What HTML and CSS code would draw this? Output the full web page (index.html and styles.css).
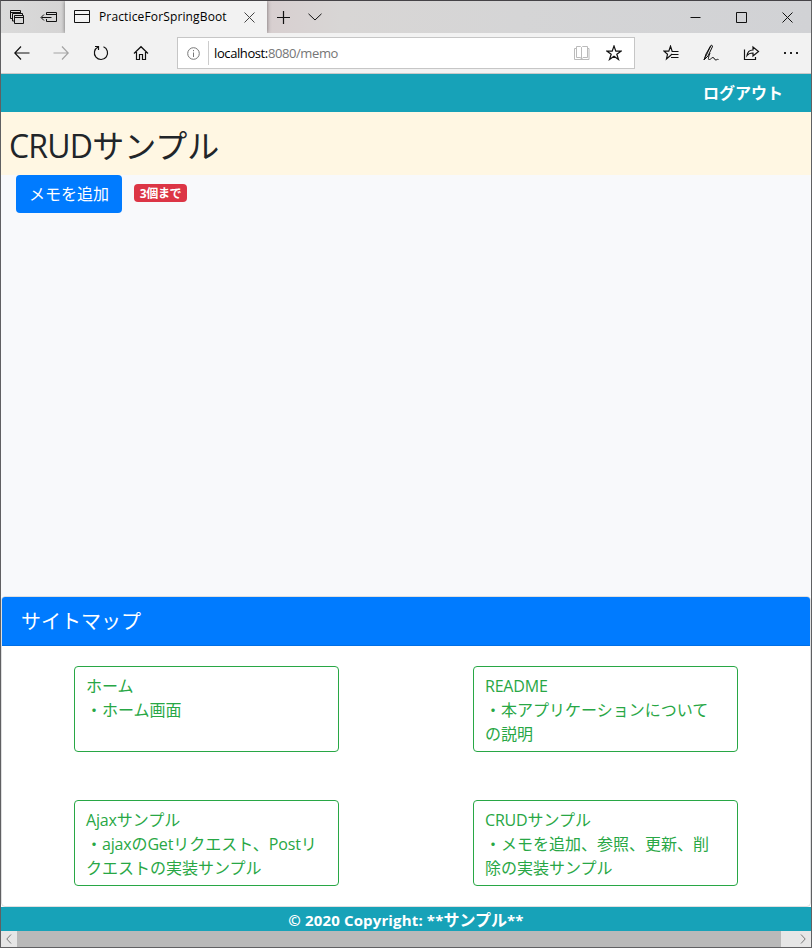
FILE: index.html
```html
<!DOCTYPE html>
<html lang="ja">
<head>
<meta charset="utf-8">
<title>PracticeForSpringBoot</title>
<link rel="stylesheet" href="styles.css">
</head>
<body>
<div class="window">
  <div class="tabs">
    <span class="cell"><svg width="16" height="16" viewBox="0 0 16 16"><path d="M4 9.500H1.500V1.500H11.500V4M5.500 12H3.500V4.500H13.500V6M1.500 3.500H11M5.500 6.500H14.500V14.500H5.500ZM5.500 8.500H14.500"/></svg></span>
    <span class="cell"><svg width="18" height="16" viewBox="0 0 18 16"><path d="M6.500 6V3.500H16.500V12.500H6.500V10M6.500 5.500H16.500M1.500 8.500H11.500M4 5.500L1 8.500L4 11.500"/></svg></span>
    <div class="tab">
      <svg width="16" height="14" viewBox="0 0 16 14"><path d="M.5.500H15.500V12.500H.5ZM.5 4.500H15.500"/></svg>
      <span class="title">PracticeForSpringBoot</span>
      <svg class="close" width="11" height="11" viewBox="0 0 11 11"><path d="M.5.500L10.500 10.500M10.500.500L.5 10.500"/></svg>
    </div>
    <span class="cell"><svg width="13" height="13" viewBox="0 0 13 13"><path class="heavy" d="M6.500 0V13M0 6.500H13"/></svg></span>
    <span class="cell"><svg width="14" height="8" viewBox="0 0 14 8"><path d="M.5.800L7 7L13.500.800"/></svg></span>
    <span class="controls">
      <i><svg width="11" height="11" viewBox="0 0 11 11"><path d="M.5 5.500H10.500"/></svg></i>
      <i><svg width="11" height="11" viewBox="0 0 11 11"><path d="M.5.500H10.500V10.500H.5Z"/></svg></i>
      <i><svg width="11" height="11" viewBox="0 0 11 11"><path d="M.5.500L10.500 10.500M10.500.500L.5 10.500"/></svg></i>
    </span>
  </div>
  <div class="toolbar">
    <i><svg width="16" height="14" viewBox="0 0 16 14"><path class="heavy" d="M15.500 7H1M7 .5L.8 7L7 13.500"/></svg></i>
    <i class="dim"><svg width="16" height="14" viewBox="0 0 16 14"><path class="heavy" d="M.5 7H15M9 .5L15.200 7L9 13.500"/></svg></i>
    <i><svg width="16" height="16" viewBox="0 0 16 16"><path class="heavy" d="M10.500 1.800A6.600 6.600 0 1 1 5 2M2 1.500H5.500V5"/></svg></i>
    <i><svg width="16" height="16" viewBox="0 0 16 16"><path class="heavy" d="M1 8.500L8 1.700L15 8.500M3.500 7V14.500H6.500V9.500H9.500V14.500H12.500V7"/></svg></i>
    <div class="address">
      <svg class="info" width="13" height="13" viewBox="0 0 13 13"><circle cx="6.500" cy="6.500" r="5.800"/><path d="M6.500 5.500V10M6.500 3V4.200"/></svg>
      <span class="url">localhost:<em>8080/memo</em></span>
      <svg class="book" width="16" height="15" viewBox="0 0 16 15"><path d="M2.500.500H6.500L7.500 1.500L8.500.500H13.500V11.500H9L7.500 13L6.500 11.500H2.500ZM7.500 1.500V13M2.500 2.500H.5V13.500H15V2.500H13.500"/></svg>
      <svg class="star" width="16" height="16" viewBox="0 0 16 16"><path class="heavy" d="M8 1L9.800 6.200H15L10.800 9.300L12.500 14.500L8 11.300L3.500 14.500L5.200 9.300L1 6.200H6.200Z"/></svg>
    </div>
    <i><svg width="16" height="16" viewBox="0 0 16 16"><path class="heavy" d="M9 9L7.200 10.800L3.500 14L4.500 9.300L1 6.200H5.800L7.500 1.200L9.200 6.500H15.500M9 9.500H15.500M8 12.500H15.500"/></svg></i>
    <i><svg width="18" height="18" viewBox="0 0 18 18"><path d="M2 16L4 10L8.500 2C9.500.500 11 1.500 10.300 3L6 12L2 16L9 1.500M8 9C6.500 13 5.500 16 7.500 15.500C9.500 15 9.500 13.500 11 13.500S12.500 16.500 14 16S15.500 15 16.500 15.500"/></svg></i>
    <i><svg width="17" height="16" viewBox="0 0 17 16"><path class="heavy" d="M1.500 4.500V14.500H12.500V12M4 10.500C4.500 6.500 6 5 10 5V2L15.500 6.500L10 11V8C7 8 5.500 8.500 4 10.500Z"/></svg></i>
    <i><svg width="16" height="4" viewBox="0 0 16 4"><path class="dots" d="M1 1H3V3H1ZM7 1H9V3H7ZM13 1H15V3H13Z"/></svg></i>
  </div>

  <nav class="navbar"><a>ログアウト</a></nav>
  <header class="heading"><h1><b class="lat">CRUD</b>サンプル</h1></header>
  <main class="content">
    <button class="add">メモを追加</button>
    <span class="badge">3個まで</span>
  </main>
  <section class="sitemap">
    <h2>サイトマップ</h2>
    <div class="links">
      <a>ホーム<br>・ホーム画面</a>
      <a><b class="lat">README</b><br>・本アプリケーションについて<br>の説明</a>
      <a><b class="lat">Ajax</b>サンプル<br>・<b class="lat">ajax</b>の<b class="lat">Get</b>リクエスト、<b class="lat">Post</b>リ<br>クエストの実装サンプル</a>
      <a><b class="lat">CRUD</b>サンプル<br>・メモを追加、参照、更新、削<br>除の実装サンプル</a>
    </div>
  </section>
  <footer class="footer">© 2020 Copyright: **<span class="kana">サンプル</span>**</footer>
  <div class="scrollbar">
    <span class="left"><svg width="6" height="10" viewBox="0 0 6 10"><path d="M5 .5L.8 5L5 9.500"/></svg></span>
    <span class="right"><svg width="6" height="10" viewBox="0 0 6 10"><path d="M1 .5L5.200 5L1 9.500"/></svg></span>
  </div>
</div>
</body>
</html>
```
FILE: styles.css
```css
* { box-sizing: border-box; }
body {
  margin: 0;
  font-family: "Open Sans", "Noto Sans CJK JP", sans-serif;
  font-size: 16px;
  line-height: 24px;
  color: #212529;
}
.window {
  width: 812px;
  height: 948px;
  display: flex;
  flex-direction: column;
  border: 1px solid #606062;
  border-top-color: #454347;
  overflow: hidden;
  white-space: nowrap;
}
.window > * { flex: none; }
svg { display: block; flex: none; fill: none; stroke: #111; stroke-width: 1; }
.heavy { stroke-width: 1.2; }
i { font-style: normal; display: flex; align-items: center; justify-content: center; }

.tabs {
  height: 32px;
  display: flex;
  background: linear-gradient(90deg, #dadada 0, #d5d4d4 64px, #d8cfd0 267px, #d8d6d5 340px, #d5d5d6 520px, #d1d2d5 100%);
}
.cell { width: 32px; display: flex; align-items: center; justify-content: center; }
.tab {
  width: 202px;
  display: flex;
  align-items: center;
  padding: 0 12px 0 9px;
  background: #f2f2f2;
  box-shadow: 0 0 4px rgba(0, 0, 0, .5);
  clip-path: inset(0 -5px 0 -5px);
}
.title { margin-left: 9px; font-size: 12px; color: #000; letter-spacing: .14px; }
.close { margin-left: auto; stroke: #444; }
.controls { margin-left: auto; display: flex; }
.controls i { width: 46px; padding-right: 1px; }

.toolbar {
  height: 41px;
  display: flex;
  background: #f2f2f2;
  border-bottom: 1px solid #c9c9c9;
}
.toolbar i { width: 40px; }
.toolbar i:first-child { padding-left: 1px; }
.toolbar .dim svg { stroke: #a3a3a3; }
.toolbar svg .dots { fill: #222; stroke: none; }
.address {
  width: 458px;
  height: 32px;
  margin: 4px 16px 0;
  display: flex;
  align-items: center;
  background: #fff;
  border: 1px solid #c6c6c6;
  padding: 0 12px 0 9px;
}
.address .info { stroke: #777; }
.url {
  margin-left: 8px;
  padding-left: 5px;
  border-left: 1px solid #ccc;
  font-size: 13px;
  color: #000;
  letter-spacing: -.4px;
}
.url em { font-style: normal; color: #767676; }
.book { margin-left: auto; stroke: #bbb; }
.star { margin-left: 16px; }

.navbar {
  height: 38px;
  padding: 7px 28px 0;
  background: #17a2b8;
  color: #fff;
  font-weight: 700;
  text-align: right;
}
.heading { height: 63px; padding: 15px 8px 0; background: #fff7e3; }
h1 { margin: 0; font-size: 32px; line-height: 38px; font-weight: 400; }
.lat { font-weight: 400; letter-spacing: -.2px; }
h1 .lat { letter-spacing: -.8px; }
.content { height: 421px; padding-left: 15px; display: flex; align-items: flex-start; background: #f8f9fb; }
.add {
  width: 106px;
  height: 38px;
  padding: 0;
  border: 0;
  border-radius: 4px;
  background: #007bff;
  color: #fff;
  font: 400 16px/38px "Open Sans", "Noto Sans CJK JP", sans-serif;
}
.badge {
  width: 53px;
  height: 18px;
  margin: 9px 0 0 12px;
  border-radius: 4px;
  background: #dc3545;
  color: #fff;
  font-size: 12px;
  line-height: 19px;
  font-weight: 700;
  text-align: center;
  letter-spacing: -.3px;
}

.sitemap {
  height: 311px;
  background: #fff;
  border: 1px solid #dedfe0;
  border-radius: 4px;
  overflow: hidden;
}
h2 {
  height: 49px;
  margin: 0;
  padding-left: 19px;
  background: #007bff;
  border-bottom: 1px solid #006fe6;
  color: #fff;
  font-size: 20px;
  line-height: 49px;
  font-weight: 400;
}
.links {
  display: grid;
  grid-template-columns: 265px 265px;
  grid-auto-rows: 86px;
  gap: 48px 134px;
  padding: 20px 0 0 72px;
}
.links a {
  padding: 7px 11px 0;
  border: 1px solid #28a745;
  border-radius: 4px;
  color: #28a745;
}
.footer {
  height: 24px;
  padding-top: 1px;
  background: #17a2b8;
  color: #fff;
  font-size: 15px;
  font-weight: 700;
  text-align: center;
  letter-spacing: .15px;
}
.kana { font-size: 16px; letter-spacing: 0; }
.scrollbar { height: 16px; display: flex; justify-content: space-between; background: #b9b9b9; }
.scrollbar span { display: flex; align-items: center; background: #e6e6e6; }
.scrollbar svg { stroke: #777; }
.left { width: 16px; justify-content: center; }
.right { width: 30px; justify-content: flex-end; padding-right: 5px; }
```
